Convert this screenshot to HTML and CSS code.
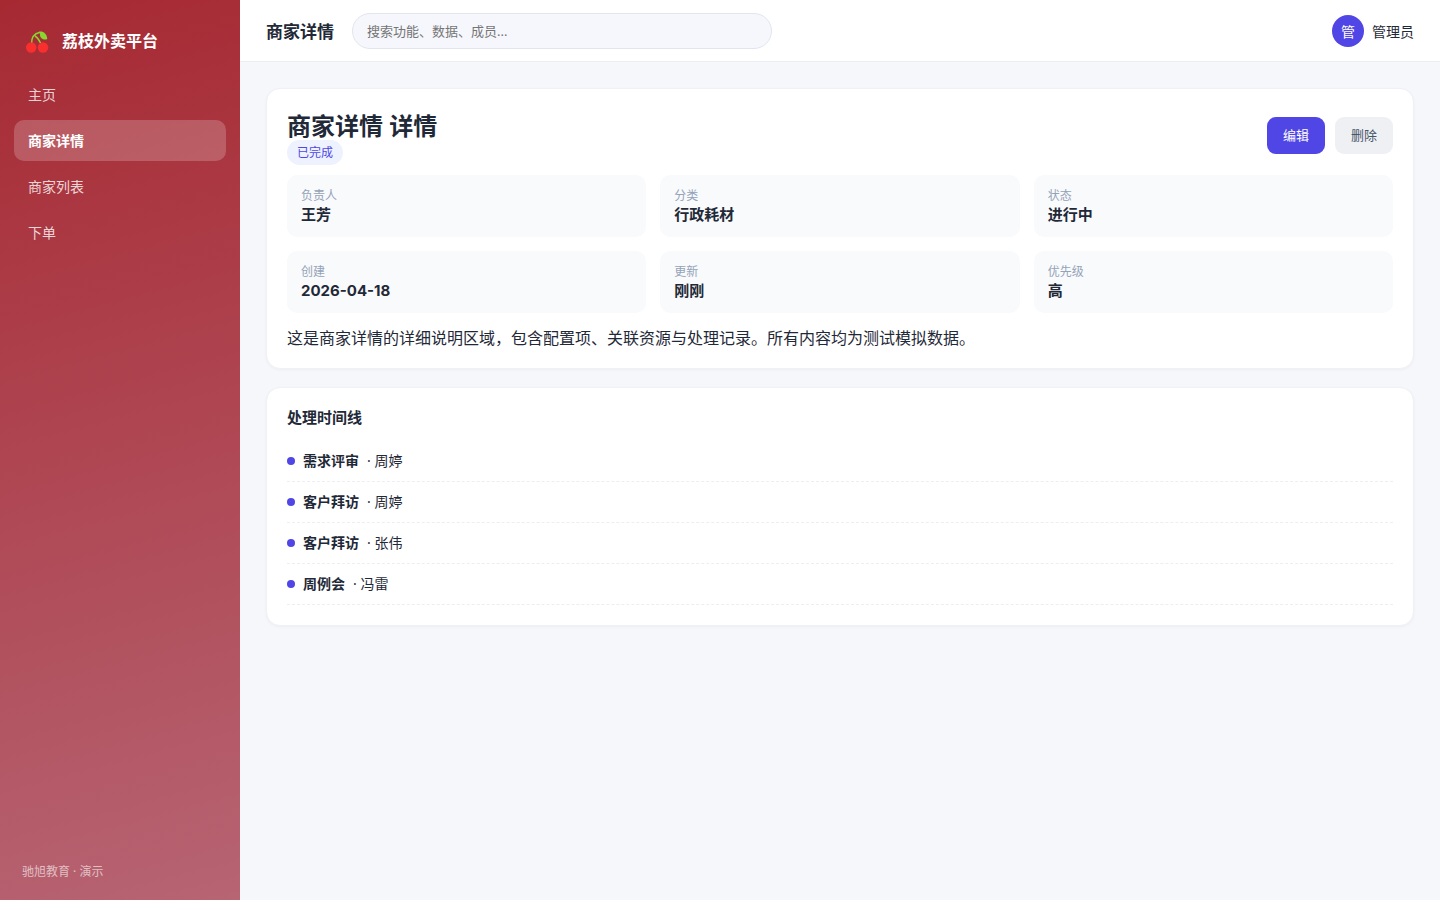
FILE: index.html
```
<!DOCTYPE html>
<html lang="zh-CN">
  <head>
    <meta charset="UTF-8" />
    <meta name="viewport" content="width=device-width, initial-scale=1.0" />
    <title>商家详情 - 荔枝外卖平台</title>
    <link rel="stylesheet" href="styles.css">
  </head>
  <body>
    <aside class="sidebar">
      <div class="brand">
        <svg class="brand-icon" viewBox="0 0 24 26" aria-hidden="true">
          <path d="M5.500 17C5.500 11 8 6.500 13.500 5.500M9 9C11 10 13 13 14.500 16" fill="none" stroke="#86d72f" stroke-width="1.500" />
          <path d="M12.500 5C16 3.500 21 6 21.300 12C18 13.500 14 11.500 14 8C14 6.500 13.500 6 12.500 5Z" fill="#86d72f" />
          <circle cx="5.200" cy="20.500" r="5.200" fill="#f92f2f" />
          <circle cx="17" cy="20.500" r="5.200" fill="#f92f2f" />
        </svg>
        <span>荔枝外卖平台</span>
      </div>
      <nav class="nav">
        <a href="#">主页</a>
        <a href="#" class="active">商家详情</a>
        <a href="#">商家列表</a>
        <a href="#">下单</a>
      </nav>
      <div class="sidebar-footer">驰旭教育 · 演示</div>
    </aside>

    <div class="main">
      <header class="topbar">
        <div class="page-title">商家详情</div>
        <input type="search" class="search" placeholder="搜索功能、数据、成员..." aria-label="搜索" />
        <div class="user">
          <span class="avatar">管</span>
          <span>管理员</span>
        </div>
      </header>

      <main class="content">
        <section class="card">
          <div class="detail-head">
            <div>
              <h1>商家详情 详情</h1>
              <div class="status"><span class="badge">已完成</span></div>
            </div>
            <div class="actions">
              <button type="button" class="btn primary">编辑</button>
              <button type="button" class="btn">删除</button>
            </div>
          </div>
          <dl class="meta">
            <div class="meta-item"><dt>负责人</dt><dd>王芳</dd></div>
            <div class="meta-item"><dt>分类</dt><dd>行政耗材</dd></div>
            <div class="meta-item"><dt>状态</dt><dd>进行中</dd></div>
            <div class="meta-item"><dt>创建</dt><dd>2026-04-18</dd></div>
            <div class="meta-item"><dt>更新</dt><dd>刚刚</dd></div>
            <div class="meta-item"><dt>优先级</dt><dd>高</dd></div>
          </dl>
          <p class="desc">这是商家详情的详细说明区域，包含配置项、关联资源与处理记录。所有内容均为测试模拟数据。</p>
        </section>

        <section class="card">
          <h2>处理时间线</h2>
          <ul class="timeline">
            <li><span class="dot"></span><b>需求评审</b><span>· 周婷</span></li>
            <li><span class="dot"></span><b>客户拜访</b><span>· 周婷</span></li>
            <li><span class="dot"></span><b>客户拜访</b><span>· 张伟</span></li>
            <li><span class="dot"></span><b>周例会</b><span>· 冯雷</span></li>
          </ul>
        </section>
      </main>
    </div>
  </body>
</html>
```
FILE: styles.css
```
* {
  box-sizing: border-box;
  margin: 0;
  padding: 0;
}
body {
  display: flex;
  min-height: 100vh;
  font-family: "Noto Sans", "Noto Sans CJK SC", sans-serif;
  font-size: 14px;
  color: #1f2937;
  background: #f5f7fb;
}
.sidebar {
  display: flex;
  flex-direction: column;
  flex-shrink: 0;
  width: 240px;
  padding: 22px 14px;
  color: #fff;
  background: linear-gradient(165deg, #a62932, #b76473);
}
.brand {
  display: flex;
  align-items: center;
  gap: 12px;
  height: 36px;
  margin-bottom: 16px;
  padding: 0 12px;
  font-size: 16px;
  font-weight: 700;
}
.brand-icon {
  width: 24px;
  height: 26px;
}
.nav {
  display: flex;
  flex-direction: column;
  gap: 5px;
}
.nav a {
  padding: 10px 14px;
  border-radius: 10px;
  line-height: 21px;
  color: rgba(255, 255, 255, 0.8);
  text-decoration: none;
}
.nav a.active {
  color: #fff;
  font-weight: 700;
  background: rgba(255, 255, 255, 0.2);
}
.sidebar-footer {
  margin-top: auto;
  padding: 0 8px;
  font-size: 12px;
  line-height: 12px;
  color: rgba(255, 255, 255, 0.6);
}
.main {
  flex: 1;
  min-width: 0;
}
.topbar {
  display: flex;
  align-items: center;
  gap: 18px;
  height: 62px;
  padding: 0 26px;
  background: #fff;
  border-bottom: 1px solid #eceef3;
}
.page-title {
  font-size: 17px;
  font-weight: 700;
}
.search {
  flex: 0 1 420px;
  min-width: 0;
  height: 36px;
  padding: 0 14px;
  border: 1px solid #e2e5ef;
  border-radius: 18px;
  font-family: inherit;
  font-size: 13px;
  background: #f6f7fc;
}
.search::placeholder {
  color: #757575;
}
.user {
  display: flex;
  align-items: center;
  gap: 8px;
  margin-left: auto;
}
.avatar {
  display: flex;
  align-items: center;
  justify-content: center;
  width: 32px;
  height: 32px;
  border-radius: 50%;
  color: #fff;
  background: #4f46e5;
}
.content {
  display: flex;
  flex-direction: column;
  gap: 18px;
  padding: 26px;
}
.card {
  padding: 20px;
  border: 1px solid #eff1f5;
  border-radius: 14px;
  background: #fff;
  box-shadow: 0 1px 3px rgba(15, 23, 42, 0.04);
}
.detail-head {
  display: flex;
  align-items: center;
  justify-content: space-between;
  margin-bottom: 13px;
}
h1 {
  font-size: 24px;
  line-height: 34px;
}
.status {
  display: flex;
}
.badge {
  margin: -3px 0;
  padding: 4px 10px;
  border-radius: 13px;
  font-size: 12px;
  line-height: 17px;
  color: #4f46e5;
  background: #eef2ff;
}
.actions {
  display: flex;
  gap: 10px;
}
.btn {
  padding: 9px 16px;
  border: none;
  border-radius: 9px;
  font-family: inherit;
  font-size: 13px;
  line-height: 19px;
  color: #475569;
  background: #eef0f4;
  cursor: pointer;
}
.btn.primary {
  color: #fff;
  background: #4f46e5;
}
.meta {
  display: grid;
  grid-template-columns: repeat(3, 1fr);
  gap: 14px;
}
.meta-item {
  padding: 12px 14px;
  border-radius: 10px;
  background: #f9fafc;
}
.meta-item dt {
  font-size: 12px;
  line-height: 17px;
  color: #94a3b8;
}
.meta-item dd {
  font-family: Inter, "Noto Sans CJK SC", sans-serif;
  font-size: 15px;
  font-weight: 700;
  line-height: 21px;
}
.desc {
  margin-top: 16px;
  font-size: 16px;
  line-height: 19px;
}
h2 {
  margin-bottom: 14px;
  font-size: 15px;
  line-height: 19px;
}
.timeline {
  list-style: none;
}
.timeline li {
  display: flex;
  align-items: center;
  gap: 8px;
  padding: 10px 0;
  border-bottom: 1px dashed #eceef2;
  line-height: 20px;
}
.dot {
  width: 8px;
  height: 8px;
  border-radius: 50%;
  background: #4f46e5;
}
```
